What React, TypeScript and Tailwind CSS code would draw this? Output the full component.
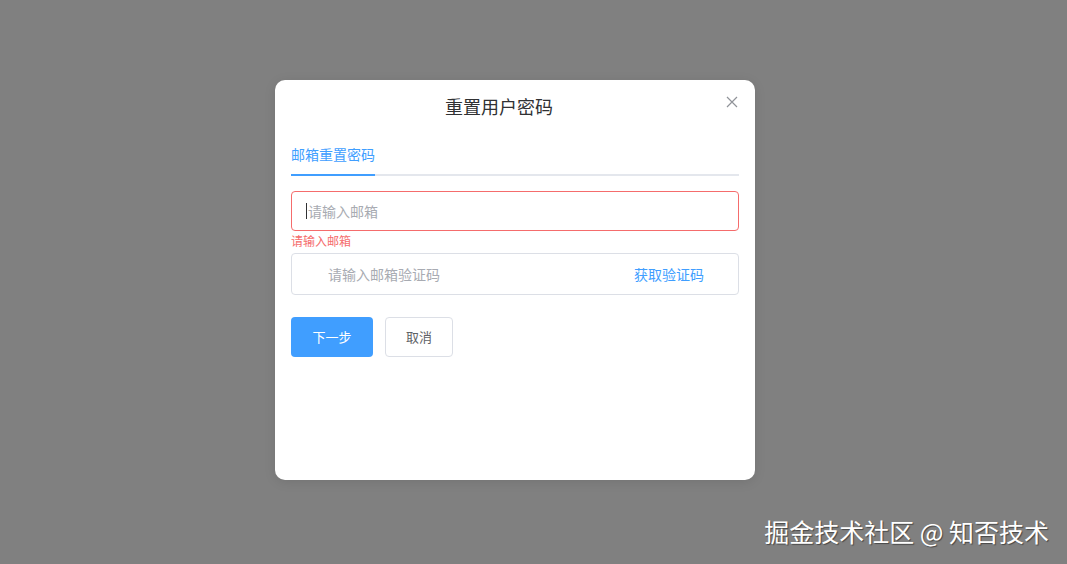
import React from 'react';

const font = '"Noto Sans CJK SC", "Liberation Sans", sans-serif';

export default function App() {
  return (
    <div
      className="relative w-[1067px] h-[564px] bg-[#808080] overflow-hidden"
      style={{ fontFamily: font }}
    >
      <div className="flex justify-center pt-[80px] pr-[37px]">
        {/* Dialog */}
        <div className="relative w-[480px] h-[400px] bg-white rounded-[10px] shadow-[0_2px_12px_rgba(0,0,0,0.1)] px-4">
          <div className="h-[52px] flex items-center justify-center pr-[32px]">
            <span className="text-[18px] text-[#303133] leading-none">重置用户密码</span>
          </div>
          <button className="absolute top-[15px] right-[16px] text-[#909399]">
            <svg width="14" height="14" viewBox="0 0 14 14" fill="none" stroke="currentColor" strokeWidth="1.2">
              <path d="M2 2 L12 12 M12 2 L2 12" />
            </svg>
          </button>

          {/* Tabs */}
          <div className="mt-[2px] relative h-[42px] flex items-center">
            <span className="text-[14px] text-[#409eff] leading-none pb-[2px]">邮箱重置密码</span>
            <div className="absolute left-0 right-0 bottom-0 h-[2px] bg-[#e4e7ed]" />
            <div className="absolute left-0 bottom-0 w-[84px] h-[2px] bg-[#409eff]" />
          </div>

          {/* Email input */}
          <div className="mt-[15px] h-[40px] border border-[#f56c6c] rounded-[4px] flex items-center px-[14px]">
            <span className="w-[1px] h-[16px] bg-[#303133] mr-[1px]" />
            <span className="text-[14px] text-[#a8abb2]">请输入邮箱</span>
          </div>
          <div className="text-[12px] text-[#f56c6c] leading-none mt-[4px] h-[18px]">请输入邮箱</div>

          {/* Code input */}
          <div className="h-[42px] border border-[#dcdfe6] rounded-[4px] flex items-center pl-[36px] pr-[34px]">
            <span className="flex-1 text-[14px] text-[#a8abb2]">请输入邮箱验证码</span>
            <span className="text-[14px] text-[#409eff]">获取验证码</span>
          </div>

          {/* Buttons */}
          <div className="mt-[22px] flex gap-[12px]">
            <button className="w-[82px] h-[40px] rounded-[4px] bg-[#409eff] text-white text-[13px]">
              下一步
            </button>
            <button className="w-[68px] h-[40px] rounded-[4px] bg-white border border-[#dcdfe6] text-[#606266] text-[13px]">
              取消
            </button>
          </div>
        </div>
      </div>

      <div
        className="absolute right-[18px] bottom-[20px] text-[25px] text-white leading-none"
        style={{ textShadow: '1px 1px 1px rgba(0,0,0,0.45)' }}
      >
        掘金技术社区 @ 知否技术
      </div>
    </div>
  );
}
